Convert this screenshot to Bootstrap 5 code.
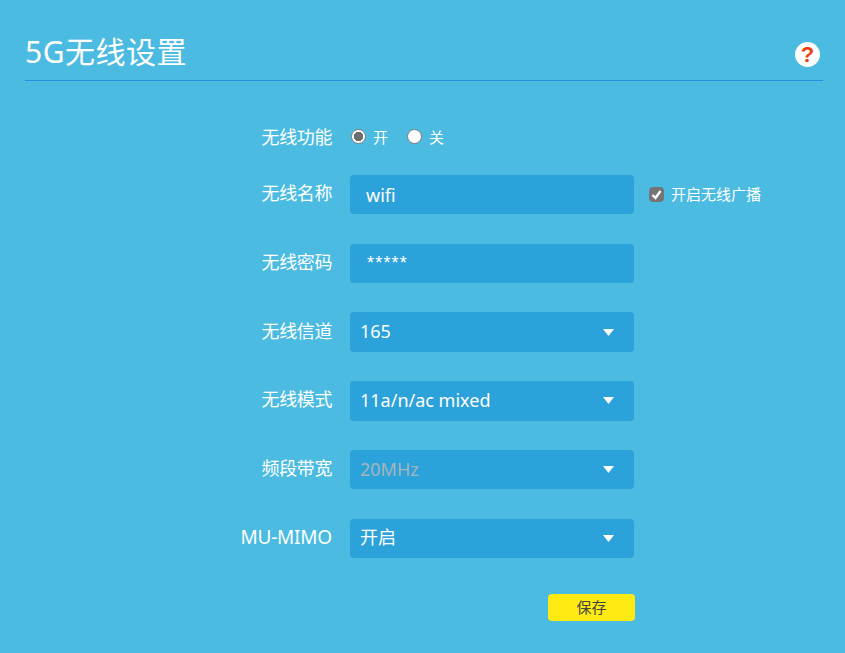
<!DOCTYPE html>
<html lang="zh-CN">
<head>
<meta charset="utf-8">
<title>5G无线设置</title>
<link rel="stylesheet" href="https://cdn.jsdelivr.net/npm/bootstrap@5.3.0/dist/css/bootstrap.min.css">
<style>
html, body { height: 100%; }
body { background: #4bbbe1; color: #fff; font-family: "Noto Sans", "Noto Sans CJK SC", sans-serif; overflow: hidden; }
.page-wrap { padding: 28px 22px 0 25px; }
.title-bar { height: 53px; border-bottom: 1px solid #2a8fdc; }
.title-bar h1 { font-size: 30px; font-weight: 400; line-height: 46px; margin: 0 0 4px; letter-spacing: .5px; }
.help-dot { width: 25px; height: 25px; margin-right: 3px; margin-top: 1px; border-radius: 50%; background: #fff; color: #f0400f; font: 700 22px/25px "Liberation Sans", sans-serif; text-align: center; text-decoration: none; }
.settings { margin-top: 36px; }
.set-row { display: grid; grid-template-columns: 325px 284px auto; align-items: center; height: 39.4px; margin-bottom: 29.34px; }
.set-row.short { height: 40px; margin-bottom: 18.05px; }
.set-label { text-align: right; padding: 0 18px 3px 0; font-size: 18px; line-height: 24px; letter-spacing: -.4px; }
.short .set-label { padding-bottom: 0; }
.latin-label { font-size: 19px; letter-spacing: -.2px; }
.field, .form-select.field { background-color: #2ca2da; border: 0; border-radius: 4px; color: #fff; font-size: 18px; height: 100%; box-shadow: none; }
.form-control.field { padding: 0 16px; }
.pw-field.form-control.field { font-family: "Liberation Sans", sans-serif; letter-spacing: 1.2px; padding: 0 16px 0 17px; }
.form-select.field { padding: 0 10px 1px; background-image: url("data:image/svg+xml,%3Csvg xmlns='http://www.w3.org/2000/svg' viewBox='0 0 11 7'%3E%3Cpath fill='%23fff' d='M0 0h11L5.500 7z'/%3E%3C/svg%3E"); background-size: 11px 7px; background-position: right 20px center; }
.form-select.field:disabled { color: #a5b5bd; background-color: #2ca2da; }
.radio-line { font-size: 15px; gap: 7px; margin-right: 18px; }
.radio-line input { width: 15px; height: 15px; margin: 0 0 2px 1px; background-color: #fff; border: 1px solid #777; }
.radio-line input:checked { background-color: #fff; border-color: #777; background-image: radial-gradient(circle, #6e6e6e 0 4.500px, #fff 5px); }
.broadcast { font-size: 15px; gap: 7px; padding-left: 15px; }
.broadcast input { width: 15px; height: 15px; margin: 0; background-color: #757575; border-color: #757575; border-radius: 2px; }
.broadcast input:checked { background-color: #757575; border-color: #757575; background-size: 13px 13px; background-image: url("data:image/svg+xml,%3Csvg xmlns='http://www.w3.org/2000/svg' viewBox='0 0 13 13'%3E%3Cpath fill='none' stroke='%23fff' stroke-width='2.400' d='M2.500 7l3 3 5-7'/%3E%3C/svg%3E"); }
.save-wrap { width: 610px; margin-top: 36.1px; }
.save-btn { width: 87px; height: 27px; padding: 0; background: #fdea12; border: 0; border-radius: 4px; font-size: 15px; line-height: 27px; color: #444; }
.save-btn:hover { background: #fdea12; color: #444; }
</style>
</head>
<body>
<div class="page-wrap">
  <div class="title-bar d-flex justify-content-between align-items-center">
    <h1>5G无线设置</h1>
    <a class="help-dot" href="#">?</a>
  </div>
  <form class="settings">
    <div class="set-row short">
      <div class="set-label">无线功能</div>
      <div class="d-flex align-items-center">
        <label class="radio-line d-flex align-items-center"><input class="form-check-input" type="radio" name="w" checked>开</label>
        <label class="radio-line d-flex align-items-center"><input class="form-check-input" type="radio" name="w">关</label>
      </div>
    </div>
    <div class="set-row">
      <div class="set-label">无线名称</div>
      <input class="form-control field" type="text" value="wifi">
      <label class="broadcast d-flex align-items-center"><input class="form-check-input" type="checkbox" checked>开启无线广播</label>
    </div>
    <div class="set-row">
      <div class="set-label">无线密码</div>
      <input class="form-control field pw-field" type="text" value="*****">
    </div>
    <div class="set-row">
      <div class="set-label">无线信道</div>
      <select class="form-select field"><option>165</option></select>
    </div>
    <div class="set-row">
      <div class="set-label">无线模式</div>
      <select class="form-select field"><option>11a/n/ac mixed</option></select>
    </div>
    <div class="set-row">
      <div class="set-label">频段带宽</div>
      <select class="form-select field" disabled><option>20MHz</option></select>
    </div>
    <div class="set-row">
      <div class="set-label latin-label">MU-MIMO</div>
      <select class="form-select field"><option>开启</option></select>
    </div>
    <div class="save-wrap d-flex justify-content-end">
      <button type="button" class="btn save-btn">保存</button>
    </div>
  </form>
</div>
<script src="https://cdn.jsdelivr.net/npm/bootstrap@5.3.0/dist/js/bootstrap.bundle.min.js"></script>
</body>
</html>
